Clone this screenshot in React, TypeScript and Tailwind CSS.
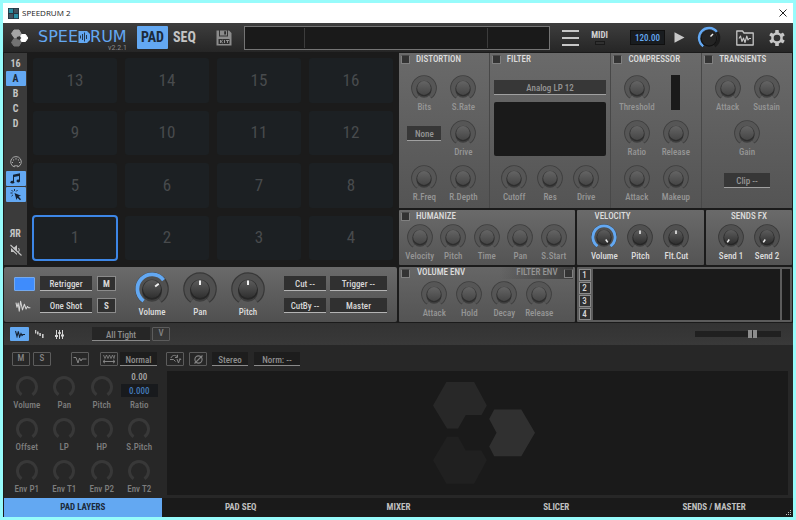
import React from "react";
import clsx from "clsx";

/* ---------- knobs ---------- */

type KnobProps = {
  label: string;
  value?: number; // 0..1, drives the pointer
  arc?: boolean; // paint the blue value ring
  size?: "sm" | "lg";
  off?: boolean;
};

function polar(c: number, r: number, t: number) {
  const a = ((-145 + 290 * t) * Math.PI) / 180;
  return [c + r * Math.sin(a), c - r * Math.cos(a)];
}

function arcPath(c: number, r: number, to: number) {
  const [x0, y0] = polar(c, r, 0);
  const [x1, y1] = polar(c, r, to);
  return `M${x0} ${y0}A${r} ${r} 0 ${to * 290 > 180 ? 1 : 0} 1 ${x1} ${y1}`;
}

function Dial({ value, arc, off, className }: { value?: number; arc?: boolean; off?: boolean; className: string }) {
  const c = 17;
  const tip = value === undefined ? null : polar(c, 8.5, value);
  const base = value === undefined ? null : polar(c, 4, value);
  return (
    <svg viewBox="0 0 34 34" className={className} aria-hidden="true">
      <path d={arcPath(c, 12.8, 1)} fill="none" stroke={off ? "#3e3e3e" : "#383838"} strokeWidth="8" />
      <path d={arcPath(c, 12.6, 1)} fill="none" stroke={off ? "#565656" : "#505050"} strokeWidth="6" />
      {arc && value !== undefined && <path d={arcPath(c, 14.6, value)} fill="none" stroke="#63a8f2" strokeWidth="3.8" />}
      <circle cx={c} cy={c + 3} r="9.8" fill="#222222" opacity="0.5" />
      <circle cx={c} cy={c + 1} r="9.8" fill={off ? "#2e2e2e" : "#262626"} />
      <circle cx={c} cy={c} r="9" fill={off ? "url(#capOff)" : "url(#capOn)"} />
      {tip && base && (
        <line x1={base[0]} y1={base[1]} x2={tip[0]} y2={tip[1]} stroke="#f2f2f2" strokeWidth="2" />
      )}
    </svg>
  );
}

function Range({ label }: { label: string }) {
  return <input type="range" aria-label={label} className="absolute inset-0 m-0 h-full w-full cursor-pointer opacity-0" />;
}

function Knob({ label, value, arc, size = "sm", off }: KnobProps) {
  return (
    <label className="relative flex flex-col items-center">
      <Dial value={value} arc={arc} off={off} className={size === "lg" ? "size-[34px]" : "size-[26px]"} />
      <span
        className={clsx(
          "whitespace-nowrap text-[9px] font-medium leading-[12px]",
          off ? "text-[#959595]" : "text-[#dcdcdc]"
        )}
      >
        {label}
      </span>
      <Range label={label} />
    </label>
  );
}

function FlatKnob({ label }: { label: string }) {
  return (
    <label className="relative flex flex-col items-center">
      <svg viewBox="0 0 22 22" className="size-[22px]" aria-hidden="true">
        <path d={arcPath(11, 9.5, 1)} fill="none" stroke="#383838" strokeWidth="3" />
      </svg>
      <span className="mt-0.5 whitespace-nowrap text-[9px] font-medium leading-[10px] text-[#7d7d7d]">{label}</span>
      <Range label={label} />
    </label>
  );
}

/* ---------- small controls ---------- */

function Select({ label, value, className }: { label: string; value: string; className: string }) {
  return (
    <select
      aria-label={label}
      className={clsx(
        "appearance-none rounded-none border-b px-0 pt-0.5 pb-0 text-center text-[9px] font-medium [text-align-last:center]",
        className
      )}
    >
      <option>{value}</option>
    </select>
  );
}

const padSelect = "h-[15px] border-[#b4b4b4] bg-[#303030] text-[#d6d6d6]";
const fxSelect = "h-[15px] border-[#a0a0a0] bg-[#373737] text-[#959595]";
const layerSelect = "h-[14px] border-[#8a8a8a] bg-[#1d1d1d] text-[#8e8e8e]";
const outlineBtn =
  "flex h-[14px] w-[18px] items-center justify-center rounded-[1px] border border-[#5c5c5c] text-[9px] font-medium text-[#858585]";

function Panel({
  title,
  toggle,
  className,
  titleClass,
  children,
}: {
  title: string;
  toggle?: boolean;
  className?: string;
  titleClass?: string;
  children: React.ReactNode;
}) {
  return (
    <section className={clsx("flex flex-col bg-linear-to-b from-[#6a6a6a] to-[#545454]", className)}>
      <label className={clsx("flex h-3 items-center gap-1.5 px-0.5", titleClass)}>
        {toggle && <Tick label={title} />}
        <span className="whitespace-nowrap text-[9px] font-medium leading-3 text-[#dcdcdc]">{title}</span>
      </label>
      {children}
    </section>
  );
}

function Tick({ label }: { label: string }) {
  return (
    <input
      type="checkbox"
      aria-label={label}
      className="size-[9px] shrink-0 appearance-none rounded-[1px] border border-[#808080] border-t-[#4a4a4a] bg-[#333333]"
    />
  );
}

/* ---------- drawings ---------- */

function Hexes({ className, colors }: { className: string; colors: [string, string, string] }) {
  return (
    <svg viewBox="0 0 305 305" className={className} aria-hidden="true">
      <path d="M40 0H123L161 70L145 99H98L75 139H42L0 70Z" fill={colors[0]} />
      <path d="M183 82H264L305 152L264 222H183L168 193L190 152L168 111Z" fill={colors[1]} />
      <path d="M40 304H123L161 234L145 205H98L75 164H42L0 234Z" fill={colors[2]} />
    </svg>
  );
}

function Wave({ className }: { className: string }) {
  return (
    <svg viewBox="0 0 18 14" className={className} fill="none" stroke="currentColor" strokeWidth="1.2" strokeLinejoin="round">
      <path d="M0.8 3L2 8.5L3.4 3.5L4.6 13L6.2 1.5L8.4 11.5L10.6 5L12.6 10.5L14.2 7.5L15.4 9H17.6" />
    </svg>
  );
}

function Header() {
  return (
    <header className="flex h-[29px] shrink-0 items-center bg-linear-to-b from-[#3e3e3e] to-[#262626] pr-2 pl-2">
      <svg viewBox="0 0 18 18" className="size-[18px]" aria-hidden="true">
        <path d="M3 1H8L10 4.5L8.5 7H6.5L5.5 8.5H3L0.5 4.5Z" fill="#a5a5a5" stroke="#a5a5a5" strokeLinejoin="round" />
        <path d="M10.5 5.5H14.5L16.8 9L14.5 12.5H10.5L9.6 11L10.5 9L9.6 7Z" fill="#ffffff" stroke="#ffffff" strokeLinejoin="round" />
        <path d="M3 17H8L10 13.5L8.5 11H6.5L5.5 9.5H3L0.5 13.5Z" fill="#727272" stroke="#727272" strokeLinejoin="round" />
      </svg>
      <div className="ml-[9px] flex w-[89px] flex-col pt-[7px]">
        <div className="flex items-center font-['DejaVu_Sans'] text-[16px] leading-[14px] text-[#63a8f2]">
          SPEE
          <svg viewBox="0 0 12 12" className="size-3 shrink-0" aria-hidden="true">
            <path d="M0.5 0H9L12 3V9L9 12H0.5Z" fill="#63a8f2" />
            <path d="M2.5 4.5V7.5M4.5 3V9M6.5 1.5V10.5M8.5 4V8" stroke="#23384f" fill="none" />
          </svg>
          RUM
        </div>
        <span className="self-end font-['Roboto'] text-[7px] leading-2 text-[#8a8a8a]">v2.2.1</span>
      </div>
      <nav className="ml-2.5 flex h-[23px] text-[14px] font-bold">
        <button className="w-[31px] rounded-[1px] bg-[#63a8f2] text-[#1c2a3a]">PAD</button>
        <button className="w-[33px] text-[#c4c4c4]">SEQ</button>
      </nav>
      <button aria-label="Save kit" className="ml-[15px] text-[#8c8c8c]">
        <svg viewBox="0 0 16 16" className="size-4">
          <path d="M0.5 0.5H3V6.5H12V0.5H13L15.5 3V15.5H0.5Z" fill="currentColor" />
          <path d="M4 0.5H11V5.5H4Z" fill="currentColor" />
          <path d="M8.2 1.2H10V4.6H8.2Z" fill="#2c2c2c" />
          <path d="M2.5 9H13.5V14H2.5Z" fill="#2f2f2f" />
          <path d="M4.5 10V13M6.8 10L5 11.5L6.8 13M8.5 10V13M10 10.5H13M11.5 10.5V13" stroke="#a8a8a8" strokeWidth="0.8" fill="none" />
        </svg>
      </button>
      <div className="ml-3 grid h-6 flex-1 grid-cols-[60fr_183fr_61fr] divide-x divide-[#3c3c3c] border border-[#747474] bg-[#1a1a1a] py-px">
        <span />
        <span />
        <span />
      </div>
      <button aria-label="Menu" className="ml-3 flex w-[17px] flex-col gap-[5px]">
        <span className="h-0.5 bg-[#c6c6c6]" />
        <span className="h-0.5 bg-[#c6c6c6]" />
        <span className="h-0.5 bg-[#c6c6c6]" />
      </button>
      <div className="ml-3 flex flex-col items-center text-[9px] font-bold leading-[10px] text-[#d0d0d0]">
        MIDI
        <span className="mt-px h-1 w-2.5 border border-[#1a1a1a] bg-[#303030]" />
      </div>
      <input
        aria-label="Tempo"
        defaultValue="120.00"
        className="ml-[22px] h-[15px] w-[35px] border border-[#101010] bg-[#191c1f] p-0 text-center text-[9px] font-medium text-[#63a8f2]"
      />
      <button aria-label="Play" className="ml-[9px]">
        <svg viewBox="0 0 11 11" className="size-[11px]">
          <path d="M0.5 0.3L10.5 5.5L0.5 10.7Z" fill="#c9c9c9" />
        </svg>
      </button>
      <label className="relative ml-3">
        <svg viewBox="0 0 24 24" className="size-6" aria-hidden="true">
          <path d={arcPath(12, 10, 1)} fill="none" stroke="#1b1b1b" strokeWidth="2.6" />
          <path d={arcPath(12, 10, 0.68)} fill="none" stroke="#63a8f2" strokeWidth="2.4" />
          <circle cx="12" cy="12.5" r="8.2" fill="#121212" />
          <circle cx="12" cy="12" r="7.4" fill="#242424" />
          <path d="M13.5 10.5L16 8" stroke="#eeeeee" strokeWidth="1.4" />
        </svg>
        <Range label="Master volume" />
      </label>
      <button aria-label="Browser" className="ml-[15px] text-[#c6c6c6]">
        <svg viewBox="0 0 18 16" className="h-4 w-[18px]" fill="none" stroke="currentColor" strokeWidth="1.3" strokeLinejoin="round">
          <path d="M0.8 1H6.5L8 3H17.2V15H0.8Z" />
          <path d="M3 8.5L4.5 6L6 11.5L7.5 8L9 12.5L10.8 6L12 10L13.2 8.5H15" strokeWidth="1.1" />
        </svg>
      </button>
      <button aria-label="Settings" className="ml-[15px] text-[#c6c6c6]">
        <svg viewBox="0 0 16 16" className="size-4" fill="currentColor">
          {[0, 60, 120].map((a) => (
            <rect key={a} x="6.2" y="0" width="3.6" height="16" rx="0.6" transform={`rotate(${a} 8 8)`} />
          ))}
          <circle cx="8" cy="8" r="5.8" />
          <circle cx="8" cy="8" r="3.3" fill="#303030" />
        </svg>
      </button>
    </header>
  );
}

function Rail() {
  const item = "flex h-[15px] w-5 items-center justify-center rounded-[1px]";
  return (
    <aside className="flex w-[23px] shrink-0 flex-col items-center bg-[#3b3b3b] pt-[3px] text-[10px] font-bold text-[#c4c4c4]">
      {["16", "A", "B", "C", "D"].map((t) => (
        <button key={t} className={clsx(item, t === "A" && "bg-[#63a8f2] text-[#1c2a3a]")}>
          {t}
        </button>
      ))}
      <button aria-label="MIDI input" className={clsx(item, "mt-[23px]")}>
        <svg viewBox="0 0 12 12" className="size-3" fill="none" stroke="#b4b4b4" strokeWidth="0.9">
          <path d="M4.3 10.9A5.3 5.3 0 1 1 7.7 10.9V9.8H4.3Z" />
          <path d="M2 6.5H3M9 6.5H10M3.2 3.6L4 4.2M8.8 3.6L8 4.2M6 2.2V3.4" strokeWidth="1.1" />
        </svg>
      </button>
      <button aria-label="Notes" className={clsx(item, "mt-0.5 bg-[#63a8f2]")}>
        <svg viewBox="0 0 11 11" className="size-[11px]" fill="#142233">
          <path d="M3 1.8L10 0.3V8H9V3L4 4V9.3H3Z" />
          <ellipse cx="2.4" cy="9.2" rx="1.9" ry="1.4" />
          <ellipse cx="8.3" cy="8" rx="1.8" ry="1.4" />
        </svg>
      </button>
      <button aria-label="Click select" className={clsx(item, "mt-px bg-[#63a8f2]")}>
        <svg viewBox="0 0 12 12" className="size-3" fill="#142233">
          <path d="M4.5 4L11 6.8L8.6 7.6L11 10.2L10 11.2L7.5 8.7L6.5 11Z" />
          <path d="M0.5 4H2.6M1.5 1L3 2.6M4.5 0V2M7.5 1L6.2 2.5M1.5 7.2L3 5.8" stroke="#142233" strokeWidth="0.9" />
        </svg>
      </button>
      <button aria-label="Round robin" className={clsx(item, "mt-6")}>
        ЯR
      </button>
      <button aria-label="Mute" className={clsx(item, "mt-px")}>
        <svg viewBox="0 0 12 12" className="size-3" fill="#c4c4c4">
          <path d="M1 4H3.5L7 1V11L3.5 8H1Z" />
          <path d="M8.6 4Q10 6 8.6 8" fill="none" stroke="#c4c4c4" />
          <path d="M0.5 2.5L11 12.5" stroke="#3b3b3b" strokeWidth="1.4" />
          <path d="M0.5 1L11.5 11.5" stroke="#c4c4c4" strokeWidth="1.1" />
        </svg>
      </button>
    </aside>
  );
}

function Pads() {
  const pads = [13, 14, 15, 16, 9, 10, 11, 12, 5, 6, 7, 8, 1, 2, 3, 4];
  return (
    <div className="grid flex-1 grid-cols-4 grid-rows-4 gap-2 py-[5px] pr-1 pl-1.5 text-[17px] text-[#484b4d]">
      {pads.map((n) => (
        <button
          key={n}
          className={clsx("rounded-[3px] bg-[#1c2023]", n === 1 && "outline-2 -outline-offset-1 outline-[#3d86e6]")}
        >
          {n}
        </button>
      ))}
    </div>
  );
}

function PadControls() {
  return (
    <section className="flex h-[55px] items-center justify-between rounded-[2px] bg-linear-to-b from-[#6a6a6a] to-[#505050] pr-[10px] pl-[10px]">
      <div className="grid grid-cols-[21px_52px_19px] items-center gap-x-[5px] gap-y-[7px]">
        <button aria-label="Pad colour" className="h-[14px] rounded-[1px] border border-[#74a9ee] bg-[#3f8cfc]" />
        <Select label="Retrigger mode" value="Retrigger" className={padSelect} />
        <button className="h-[15px] border border-[#8b8b8b] bg-[#303030] text-[9px] font-bold leading-3 text-[#d6d6d6]">M</button>
        <Wave className="h-3 w-[18px] text-[#d6d6d6]" />
        <Select label="Play mode" value="One Shot" className={padSelect} />
        <button className="h-[15px] border border-[#8b8b8b] bg-[#303030] text-[9px] font-bold leading-3 text-[#d6d6d6]">S</button>
      </div>
      <div className="grid grid-cols-3 gap-x-[14px]">
        <Knob label="Volume" value={0.68} arc size="lg" />
        <Knob label="Pan" value={0.5} size="lg" />
        <Knob label="Pitch" value={0.5} size="lg" />
      </div>
      <div className="grid grid-cols-[42px_57px] gap-x-1 gap-y-[7px]">
        <Select label="Cut group" value="Cut --" className={padSelect} />
        <Select label="Trigger group" value="Trigger --" className={padSelect} />
        <Select label="Cut by group" value="CutBy --" className={padSelect} />
        <Select label="Output" value="Master" className={padSelect} />
      </div>
    </section>
  );
}

function Effects() {
  const fxGrid = "mt-[10px] grid grid-cols-[39px_39px] justify-center gap-y-[7px]";
  return (
    <div className="grid grid-cols-[90fr_121fr_90fr_90fr] gap-px rounded-[2px] bg-[#484848]">
      <Panel title="DISTORTION" toggle className="h-[155px]">
        <div className={fxGrid}>
          <Knob label="Bits" off />
          <Knob label="S.Rate" off />
          <Select label="Distortion type" value="None" className={clsx(fxSelect, "mt-1.5 w-[34px] justify-self-center")} />
          <Knob label="Drive" off />
          <Knob label="R.Freq" off />
          <Knob label="R.Depth" off />
        </div>
      </Panel>
      <Panel title="FILTER" toggle>
        <div className="flex flex-1 flex-col px-1 pt-[15px]">
          <Select label="Filter type" value="Analog LP 12" className={clsx(fxSelect, "w-full")} />
          <div className="mt-[7px] h-[54px] rounded-[2px] bg-[#1a1a1a]" />
          <div className="mt-[9px] grid grid-cols-[36px_36px_36px] justify-center">
            <Knob label="Cutoff" off />
            <Knob label="Res" off />
            <Knob label="Drive" off />
          </div>
        </div>
      </Panel>
      <Panel title="COMPRESSOR" toggle>
        <div className={fxGrid}>
          <Knob label="Threshold" off />
          <div className="h-[35px] w-[9px] justify-self-center bg-[#1a1a1a]" />
          <Knob label="Ratio" off />
          <Knob label="Release" off />
          <Knob label="Attack" off />
          <Knob label="Makeup" off />
        </div>
      </Panel>
      <Panel title="TRANSIENTS" toggle>
        <div className={fxGrid}>
          <Knob label="Attack" off />
          <Knob label="Sustain" off />
          <div className="col-span-2 flex justify-center">
            <Knob label="Gain" off />
          </div>
          <Select label="Clip mode" value="Clip --" className={clsx(fxSelect, "col-span-2 mt-2 w-[46px] justify-self-center")} />
        </div>
      </Panel>
    </div>
  );
}

function Modulation() {
  return (
    <div className="grid grid-cols-[176fr_128fr_86fr] gap-x-0.5">
      <Panel title="HUMANIZE" toggle className="h-[55px] rounded-[1px]">
        <div className="mt-0.5 grid grid-cols-5 px-1">
          <Knob label="Velocity" off />
          <Knob label="Pitch" off />
          <Knob label="Time" off />
          <Knob label="Pan" off />
          <Knob label="S.Start" off />
        </div>
      </Panel>
      <Panel title="VELOCITY" className="rounded-[1px]" titleClass="pl-[18px]">
        <div className="mt-0.5 grid grid-cols-[36px_36px_36px] justify-center">
          <Knob label="Volume" value={1} arc />
          <Knob label="Pitch" value={0.5} />
          <Knob label="Flt.Cut" value={0.5} />
        </div>
      </Panel>
      <Panel title="SENDS FX" className="rounded-[1px]" titleClass="justify-center">
        <div className="mt-0.5 grid grid-cols-[36px_36px] justify-center">
          <Knob label="Send 1" value={0} />
          <Knob label="Send 2" value={0} />
        </div>
      </Panel>
    </div>
  );
}

function Envelopes() {
  return (
    <div className="grid grid-cols-[176fr_216fr] gap-x-0.5">
      <section className="h-[55px] rounded-[1px] bg-linear-to-b from-[#666666] to-[#545454]">
        <div className="flex h-3 items-center justify-between px-0.5">
          <label className="flex items-center gap-[7px] text-[9px] font-medium text-[#dcdcdc]">
            <Tick label="Volume envelope" />
            VOLUME ENV
          </label>
          <label className="flex h-3 items-center gap-1.5 bg-linear-to-r from-transparent to-[#3e3e3e] pl-4 text-[9px] font-medium text-[#959595]">
            FILTER ENV
            <Tick label="Filter envelope" />
          </label>
        </div>
        <div className="mt-0.5 grid grid-cols-[35px_35px_35px_35px] justify-center">
          <Knob label="Attack" off />
          <Knob label="Hold" off />
          <Knob label="Decay" off />
          <Knob label="Release" off />
        </div>
      </section>
      <section className="flex gap-0.5 rounded-[1px] bg-[#5c5c5c] px-0.5 py-[2px]">
        <div className="flex w-3 flex-col justify-between">
          {["1", "2", "3", "4"].map((n) => (
            <button key={n} className="h-3 border border-[#8b8b8b] bg-[#303030] text-[9px] font-medium leading-[10px] text-[#d6d6d6]">
              {n}
            </button>
          ))}
        </div>
        <div className="flex-1 bg-[#1a1a1a]" />
        <div className="w-2 bg-[#1a1a1a]" />
      </section>
    </div>
  );
}

function LayerBar() {
  return (
    <div className="flex h-[22px] shrink-0 items-center bg-linear-to-b from-[#333333] to-[#393939] pl-1.5 pr-3">
      <button aria-label="Waveform view" className="flex h-[14px] w-[19px] items-center justify-center rounded-[1px] bg-[#63a8f2] text-[#142233]">
        <svg viewBox="0 0 10 8" className="h-2 w-2.5" fill="none" stroke="currentColor" strokeWidth="1.1">
          <path d="M0.5 1L2 6.5L3.3 1.5L4.6 7L6 3.5L7 5.5L8 4.5H10" />
        </svg>
      </button>
      <button aria-label="Steps view" className="ml-1.5">
        <svg viewBox="0 0 9 8" className="h-2 w-[9px]" fill="#c9c9c9">
          <path d="M0 0H1.3V3.5H0ZM2 1.5H3.6V4.5H2ZM4.3 3H5.9V6H4.3ZM7 4H8.6V8H7Z" />
        </svg>
      </button>
      <button aria-label="Mixer view" className="ml-[11px]">
        <svg viewBox="0 0 9 9" className="size-[9px]" fill="#d6d6d6">
          <path d="M1 0H2V9H1ZM4 0H5V9H4ZM7 0H8V9H7ZM0 5H3V7H0ZM3.2 2H5.8V4H3.2ZM6 4.6H9V6.6H6Z" />
        </svg>
      </button>
      <Select label="Layer tightness" value="All Tight" className="ml-7 h-[14px] w-[58px] border-[#8a8a8a] bg-[#262626] text-[#8e8e8e]" />
      <button className={clsx(outlineBtn, "ml-0.5")}>V</button>
      <div className="relative ml-auto flex h-[6px] w-[86px] items-center bg-[#202020]">
        <div className="ml-[53px] flex gap-px">
          <span className="h-2 w-1 bg-[#8c8c8c]" />
          <span className="h-2 w-1 bg-[#8c8c8c]" />
        </div>
        <Range label="Layer balance" />
      </div>
    </div>
  );
}

function Layers() {
  return (
    <div className="flex flex-1 flex-col bg-[#272727] px-2 pt-[7px] pb-[3px]">
      <div className="flex items-center">
        <button className={outlineBtn}>M</button>
        <button className={clsx(outlineBtn, "ml-[3px]")}>S</button>
        <button aria-label="Reverse" className={clsx(outlineBtn, "ml-5")}>
          <svg viewBox="0 0 14 9" className="h-[9px] w-[14px]" fill="none" stroke="currentColor">
            <path d="M0.5 2.5H3L5 8L6.5 3L8 6L9 4H13.5" />
          </svg>
        </button>
        <button aria-label="Stretch" className={clsx(outlineBtn, "ml-[11px]")}>
          <svg viewBox="0 0 14 10" className="h-[10px] w-[14px]" fill="none" stroke="currentColor">
            <path d="M1.5 1L3 4.5L4.5 1L6 4.5L7.5 1L9 4.5L10.5 1L12 4.5L12.8 1" strokeWidth="0.8" />
            <path d="M1 7.5H13M3 5.8L1 7.5L3 9.2M11 5.8L13 7.5L11 9.2" />
          </svg>
        </button>
        <Select label="Stretch mode" value="Normal" className={clsx(layerSelect, "ml-0.5 w-[37px]")} />
        <button aria-label="Loop" className={clsx(outlineBtn, "ml-[9px]")}>
          <svg viewBox="0 0 13 10" className="h-[10px] w-[13px]" fill="none" stroke="currentColor">
            <path d="M2 4C3 1 6 0.8 8 2.5M8.5 0.8V3.5H6M1 5.5H4.5L6.5 7.5M8 5L9.5 9L11 4.5L12 6" />
          </svg>
        </button>
        <button aria-label="Invert phase" className={clsx(outlineBtn, "ml-[5px]")}>
          <svg viewBox="0 0 11 11" className="size-[11px]" fill="none" stroke="currentColor" strokeWidth="1.1">
            <circle cx="5.5" cy="5.5" r="3.6" />
            <path d="M1.5 9.5L9.5 1.5" />
          </svg>
        </button>
        <Select label="Channels" value="Stereo" className={clsx(layerSelect, "ml-[5px] w-9")} />
        <Select label="Normalise" value="Norm: --" className={clsx(layerSelect, "ml-1.5 w-[46px]")} />
      </div>
      <div className="mt-[5px] flex flex-1">
        <div className="-ml-1 grid w-[150px] shrink-0 grid-cols-4 content-start gap-y-2 pt-[5px]">
          <FlatKnob label="Volume" />
          <FlatKnob label="Pan" />
          <FlatKnob label="Pitch" />
          <label className="-mt-1 flex flex-col items-center text-[9px] font-medium leading-[10px] text-[#7d7d7d]">
            <span className="text-[#a8a8a8]">0.00</span>
            <input
              aria-label="Ratio"
              defaultValue="0.000"
              className="mt-0.5 h-[13px] w-[37px] bg-[#181a1d] p-0 text-center text-[9px] font-medium text-[#4379b8]"
            />
            <span className="mt-[3px]">Ratio</span>
          </label>
          <FlatKnob label="Offset" />
          <FlatKnob label="LP" />
          <FlatKnob label="HP" />
          <FlatKnob label="S.Pitch" />
          <FlatKnob label="Env P1" />
          <FlatKnob label="Env T1" />
          <FlatKnob label="Env P2" />
          <FlatKnob label="Env T2" />
        </div>
        <div className="-mr-[3px] ml-[9px] flex flex-1 items-center justify-center bg-[#1a1a1a] pl-3">
          <Hexes className="size-[102px]" colors={["#282828", "#303030", "#202020"]} />
        </div>
      </div>
    </div>
  );
}

export default function App() {
  const tabs = ["PAD LAYERS", "PAD SEQ", "MIXER", "SLICER", "SENDS / MASTER"];
  return (
    <div className="flex min-h-screen flex-col border-3 border-[#97fbfb] bg-[#1b1b1b] font-['Roboto_Condensed','Roboto',sans-serif]">
      <svg className="absolute size-0" aria-hidden="true">
        <defs>
          <linearGradient id="capOff" x1="0" y1="0" x2="0" y2="1">
            <stop offset="0" stopColor="#646464" />
            <stop offset="1" stopColor="#464646" />
          </linearGradient>
          <linearGradient id="capOn" x1="0" y1="0" x2="0" y2="1">
            <stop offset="0" stopColor="#5c5c5c" />
            <stop offset="1" stopColor="#303030" />
          </linearGradient>
        </defs>
      </svg>
      <div className="flex h-5 shrink-0 items-center bg-white pr-1 pl-[5px]">
        <svg viewBox="0 0 11 11" className="size-[11px]" aria-hidden="true">
          <path d="M0 0H11V11H0Z" fill="#26343f" />
          <path d="M0.8 0.8H5V5H0.8ZM6 6H10.2V10.2H6Z" fill="#2a8fa4" />
          <path d="M6 0.8H10.2V5H6ZM0.8 6H5V10.2H0.8Z" fill="#43535f" />
        </svg>
        <h1 className="ml-[3px] font-['Open_Sans'] text-[8px] text-[#1a1a1a]">SPEEDRUM 2</h1>
        <button aria-label="Close" className="ml-auto p-0.5">
          <svg viewBox="0 0 8 8" className="size-2" stroke="#222222" strokeWidth="1">
            <path d="M0.5 0.5L7.5 7.5M7.5 0.5L0.5 7.5" />
          </svg>
        </button>
      </div>
      <Header />
      <main className="flex flex-1 flex-col pl-px">
        <div className="flex gap-0.5 pt-px">
          <div className="flex flex-1 flex-col gap-0.5">
            <div className="flex flex-1">
              <Rail />
              <Pads />
            </div>
            <PadControls />
          </div>
          <div className="flex flex-1 flex-col gap-0.5 pr-px">
            <Effects />
            <Modulation />
            <Envelopes />
          </div>
        </div>
        <div className="mt-px flex flex-1 flex-col">
          <LayerBar />
          <Layers />
        </div>
        <nav className="grid h-[19px] shrink-0 grid-cols-5 bg-[#1a1a1a] text-[9px] font-bold text-[#c0c0c0]">
          {tabs.map((t, i) => (
            <button key={t} className={clsx("relative", i === 0 && "bg-[#63a8f2] text-[#1c2a3a]")}>
              {t}
              {i === tabs.length - 1 && (
                <svg viewBox="0 0 6 6" className="absolute right-px bottom-px size-1.5" fill="#c0c0c0">
                  <path d="M4 0H5V1H4ZM4 2H5V3H4ZM2 2H3V3H2ZM4 4H5V5H4ZM2 4H3V5H2ZM0 4H1V5H0Z" />
                </svg>
              )}
            </button>
          ))}
        </nav>
      </main>
    </div>
  );
}
